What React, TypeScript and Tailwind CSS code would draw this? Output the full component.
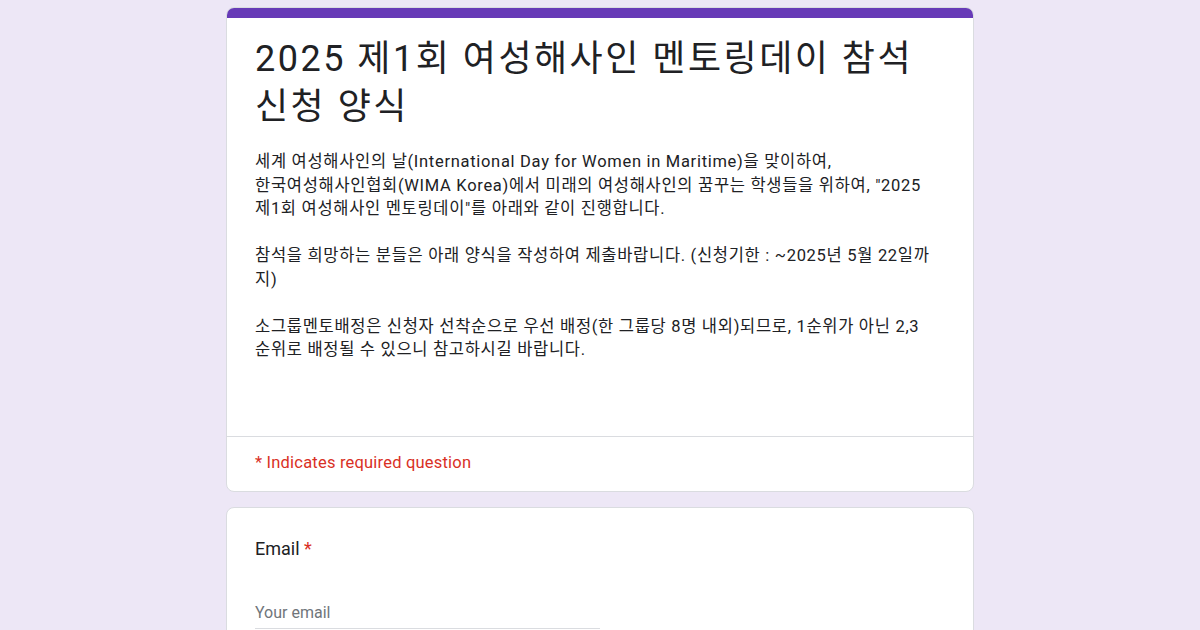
const font = { fontFamily: "Roboto, 'Noto Sans CJK KR', sans-serif" };

const lines = [
  "세계 여성해사인의 날(International Day for Women in Maritime)을 맞이하여,",
  '한국여성해사인협회(WIMA Korea)에서 미래의 여성해사인의 꿈꾸는 학생들을 위하여, "2025',
  '제1회 여성해사인 멘토링데이"를 아래와 같이 진행합니다.',
  "",
  "참석을 희망하는 분들은 아래 양식을 작성하여 제출바랍니다. (신청기한 : ~2025년 5월 22일까",
  "지)",
  "",
  "소그룹멘토배정은 신청자 선착순으로 우선 배정(한 그룹당 8명 내외)되므로, 1순위가 아닌 2,3",
  "순위로 배정될 수 있으니 참고하시길 바랍니다.",
];

const App = () => {
  return (
    <div className="min-h-[630px] w-full bg-[#ede7f6] overflow-hidden" style={font}>
      <div className="mx-auto w-[748px] pt-[7px] flex flex-col gap-[15px]">
        {/* Header card */}
        <div className="bg-white rounded-lg border border-[#dadce0] overflow-hidden">
          <div className="h-[10px] bg-[#673ab7]" />
          <div className="px-[28px] pt-[17px] pb-[74px]">
            <h1 className="text-[36px] leading-[48px] text-[#202124] tracking-[2.5px] whitespace-nowrap">
              2025 제1회 여성해사인 멘토링데이 참석
              <br />
              신청 양식
            </h1>
            <div className="mt-[19px] text-[16.5px] leading-[23.5px] text-[#202124] tracking-[0.7px] whitespace-nowrap">
              {lines.map((line, i) => (
                <p key={i}>{line || "\u00a0"}</p>
              ))}
            </div>
          </div>
          <div className="border-t border-[#dadce0] px-[28px] pt-[15px] pb-[17px]">
            <p className="text-[16.5px] leading-[22px] text-[#d93025] tracking-[0.2px]">* Indicates required question</p>
          </div>
        </div>

        {/* Email card */}
        <div className="bg-white rounded-lg border border-[#dadce0] px-[28px] pt-[29px] h-[200px]">
          <div className="text-[18px] leading-[24px] text-[#202124]">
            Email <span className="text-[#d93025]">*</span>
          </div>
          <div className="mt-[40px] w-[345px] border-b border-[#dadce0] pb-[3px]">
            <span className="text-[16px] leading-[20px] text-[#70757a]">Your email</span>
          </div>
        </div>
      </div>
    </div>
  );
};

export default App;
